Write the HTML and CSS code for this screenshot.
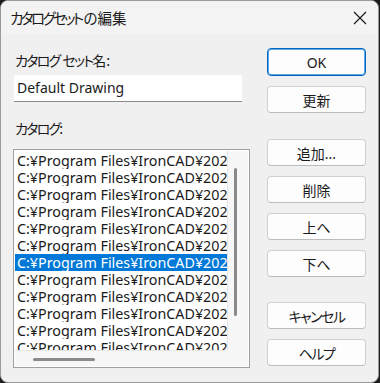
FILE: index.html
```html
<!DOCTYPE html>
<html lang="ja">
<head>
<meta charset="utf-8">
<link rel="stylesheet" href="styles.css">
</head>
<body>
<div class="window">
  <div class="titlebar">
    <span class="title"><span class="k t">カタログセット</span>の編集</span>
    <svg class="close" width="14" height="14" viewBox="0 0 14 14"><path d="M1 1 L13 13 M13 1 L1 13" stroke="#1a1a1a" stroke-width="1.2" fill="none"/></svg>
  </div>
  <div class="content">
    <div class="left">
      <div class="label first"><span class="k">カタログ</span> <span class="k">セット</span>名:</div>
      <div class="field">Default Drawing</div>
      <div class="label second"><span class="k">カタログ</span>:</div>
      <div class="listbox">
        <div class="items">
          <div class="item">C:¥Program Files¥IronCAD¥202</div>
          <div class="item">C:¥Program Files¥IronCAD¥202</div>
          <div class="item">C:¥Program Files¥IronCAD¥202</div>
          <div class="item">C:¥Program Files¥IronCAD¥202</div>
          <div class="item">C:¥Program Files¥IronCAD¥202</div>
          <div class="item">C:¥Program Files¥IronCAD¥202</div>
          <div class="item selected">C:¥Program Files¥IronCAD¥202</div>
          <div class="item">C:¥Program Files¥IronCAD¥202</div>
          <div class="item">C:¥Program Files¥IronCAD¥202</div>
          <div class="item">C:¥Program Files¥IronCAD¥202</div>
          <div class="item">C:¥Program Files¥IronCAD¥202</div>
          <div class="item">C:¥Program Files¥IronCAD¥202</div>
        </div>
        <div class="vscroll"><div class="vthumb"></div></div>
        <div class="hscroll"><div class="hthumb"></div></div>
        <div class="corner"></div>
      </div>
    </div>
    <div class="right">
      <button class="btn default">OK</button>
      <button class="btn">更新</button>
      <button class="btn gap1">追加...</button>
      <button class="btn">削除</button>
      <button class="btn">上へ</button>
      <button class="btn">下へ</button>
      <button class="btn gap2"><span class="k">キャンセル</span></button>
      <button class="btn"><span class="k">ヘルプ</span></button>
    </div>
  </div>
</div>
</body>
</html>
```
FILE: styles.css
```css
html, body {
  margin: 0;
  padding: 0;
}
body {
  width: 380px;
  height: 383px;
  background: #1d1d1d;
  overflow: hidden;
  font-family: "Noto Sans", "Noto Sans CJK JP", sans-serif;
  font-feature-settings: "palt";
  color: #1a1a1a;
}
.window {
  width: 377px;
  height: 381px;
  background: #f0f0f0;
  border: 1px solid #9a9a9a;
  border-radius: 8px;
  overflow: hidden;
  box-sizing: content-box;
}
.titlebar {
  height: 33px;
  background: #f3f3f3;
  display: flex;
  align-items: center;
  justify-content: space-between;
  padding: 0 10px 0 9px;
}
.title {
  font-size: 14.5px;
  font-family: "Noto Sans CJK JP", sans-serif;
}
.k {
  letter-spacing: -1.8px;
}
.k.t {
  letter-spacing: -2.6px;
  margin-right: 2px;
}
.close {
  margin-right: 1px;
}
.content {
  display: flex;
  padding-left: 12px;
}
.left {
  width: 237px;
  display: flex;
  flex-direction: column;
}
.label {
  font-size: 14px;
  font-family: "Noto Sans CJK JP", sans-serif;
  line-height: 18px;
  padding-left: 2px;
}
.label.first {
  margin-top: 17px;
}
.label.second {
  margin-top: 17px;
}
.field {
  margin-top: 6px;
  margin-left: 1px;
  width: 228px;
  height: 27px;
  box-sizing: border-box;
  background: #fff;
  border-bottom: 1px solid #8a8a8a;
  font-size: 14px;
  line-height: 26px;
  padding-left: 3px;
}
.listbox {
  margin-top: 12px;
  width: 237px;
  height: 219px;
  box-sizing: border-box;
  border: 1px solid #a0a0a0;
  padding: 1px;
  background: #fff;
  display: grid;
  grid-template-columns: 212px 1fr;
  grid-template-rows: 199px 1fr;
}
.items {
  overflow: hidden;
  background: #fff;
  padding-top: 1px;
}
.item {
  height: 17px;
  line-height: 17px;
  font-size: 14.3px;
  white-space: nowrap;
  overflow: hidden;
  padding-left: 2px;
}
.item.selected {
  background: #0078d7;
  color: #fff;
}
.vscroll {
  background: #f7f7f7;
  border-left: 1px solid #e4e4e4;
  padding-top: 17px;
}
.vthumb {
  width: 3px;
  height: 148px;
  margin-left: 6px;
  background: #8a8a8a;
  border-radius: 2px;
}
.hscroll {
  background: #f7f7f7;
  border-top: 1px solid #e4e4e4;
  padding-top: 7px;
}
.hthumb {
  width: 62px;
  height: 3px;
  margin-left: 18px;
  background: #8a8a8a;
  border-radius: 2px;
}
.corner {
  background: #f7f7f7;
}
.right {
  margin-left: 17px;
  display: flex;
  flex-direction: column;
  padding-top: 14px;
}
.btn {
  width: 99px;
  height: 27px;
  margin-bottom: 10px;
  box-sizing: border-box;
  background: #fdfdfd;
  border: 1px solid #d0d0d0;
  border-bottom-color: #bcbcbc;
  border-radius: 4px;
  font-family: "Noto Sans", "Noto Sans CJK JP", sans-serif;
  font-feature-settings: "palt";
  font-size: 14px;
  color: #1a1a1a;
  padding: 0;
}
.btn .k {
  letter-spacing: -1.5px;
}
.btn.default {
  height: 28px;
  border: 1px solid #0067c0;
  box-shadow: inset 0 0 0 1px #5fa8e8;
}
.btn.gap1 {
  margin-top: 16px;
}
.btn.gap2 {
  margin-top: 15px;
}
```
